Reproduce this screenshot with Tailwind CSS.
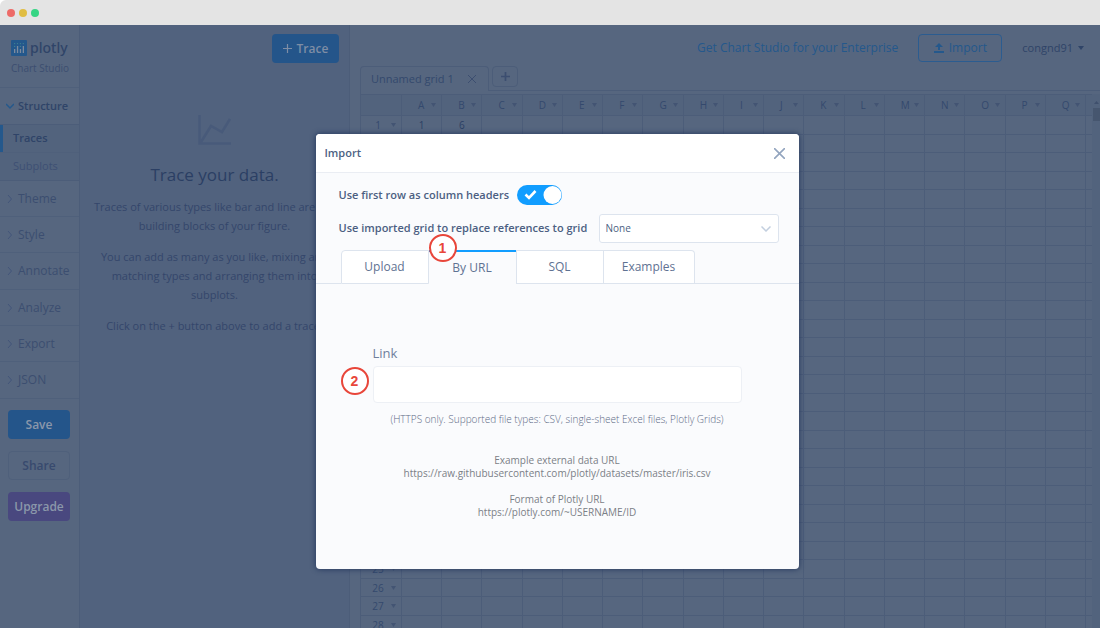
<!DOCTYPE html>
<html lang="en">
<head>
<meta charset="utf-8">
<title>Chart Studio</title>
<script src="https://cdn.jsdelivr.net/npm/@tailwindcss/browser@4"></script>
</head>
<body class="bg-white font-['Open_Sans',sans-serif] text-[12px] text-[#34496d]">
<div class="flex h-screen flex-col overflow-hidden">
  <header class="flex h-[25px] shrink-0 items-center gap-1 rounded-tl-md bg-[#e4e4e4] pl-[7px]">
    <span class="size-2 rounded-full bg-[#ed6b68]"></span>
    <span class="size-2 rounded-full bg-[#e0bd43]"></span>
    <span class="size-2 rounded-full bg-[#36d584]"></span>
  </header>

  <div class="relative flex min-h-0 flex-1">
    <!-- Sidebar -->
    <nav class="flex w-20 shrink-0 flex-col border-r border-[#4c5d79] bg-[#56667f] text-[#3c4e70]">
      <div class="flex h-[63px] flex-col border-b border-[#4f607b] pl-[11px] pt-3">
        <div class="flex h-[22px] items-center gap-[3px]">
          <svg class="size-4" viewBox="0 0 16 16"><rect width="16" height="16" rx="1" fill="#24588c"/><g fill="#7d8b9f"><rect x="3" y="9" width="1.3" height="4"/><rect x="5.9" y="6" width="1.3" height="7"/><rect x="8.8" y="9" width="1.3" height="4"/><rect x="11.7" y="6" width="1.3" height="7"/></g><g fill="#3f8291"><circle cx="3.6" cy="3.6" r=".7"/><circle cx="6.5" cy="3.6" r=".7"/><circle cx="9.4" cy="3.6" r=".7"/><circle cx="12.3" cy="3.6" r=".7"/><circle cx="3.6" cy="6.4" r=".7"/><circle cx="9.4" cy="6.4" r=".7"/></g></svg>
          <span class="font-['Noto_Sans',sans-serif] text-[14px] font-medium leading-none text-[#2f4468]">plotly</span>
        </div>
        <span class="text-[10px] leading-[18px]">Chart Studio</span>
      </div>
      <a href="#" class="flex h-[36px] items-center gap-1 pl-[6px] text-[11px] font-semibold text-[#2f4468]">
        <svg class="h-2 w-2" viewBox="0 0 8 8" fill="none" stroke="#24588c" stroke-width="1.5"><path d="M0 2l4 4 4-4"/></svg>Structure</a>
      <div class="border-y border-[#4c5d79] bg-[#52637d]">
        <a href="#" class="flex h-[27px] items-center border-l-3 border-[#24588c] pl-[10px] text-[11px] font-semibold text-[#2f4468]">Traces</a>
        <a href="#" class="flex h-7 items-center border-t border-[#4f607b] pb-px pl-[13px] text-[11px] text-[#3e5074]">Subplots</a>
      </div>
      <div id="sections"></div>
      <div class="flex flex-col gap-3 px-2 pt-[11px] pr-[9px] text-[#8b97aa]">
        <button class="h-[29px] rounded bg-[#24558a] text-[12px] font-semibold">Save</button>
        <button class="h-[29px] rounded border border-[#4f607b] text-[12px] font-semibold text-[#384a6e]">Share</button>
        <button class="h-[29px] rounded bg-[#49487f] text-[12px] font-semibold">Upgrade</button>
      </div>
    </nav>

    <!-- Trace panel -->
    <section class="flex w-[270px] shrink-0 flex-col border-r border-[#4c5d79] bg-[#51627e]">
      <div class="flex justify-end pr-[10px] pt-[9px]">
        <button class="flex h-[29px] w-[67px] items-center justify-center gap-[5px] rounded bg-[#24558a] font-semibold text-[#7e8da5]">
          <svg class="size-[9px]" viewBox="0 0 9 9" stroke="currentColor" stroke-width="1.2"><path d="M4.5 0v9M0 4.5h9"/></svg>Trace</button>
      </div>
      <svg class="mt-[52px] ml-[118px] h-[30px] w-[33px]" viewBox="0 0 33 30" fill="none" stroke="#455879" stroke-width="2.500" opacity=".7"><path d="M1.500 0v28.500H33"/><path d="M3 27L13 11l11 6L32 4"/></svg>
      <div class="flex flex-col items-center gap-3 whitespace-nowrap text-center text-[11px] leading-[19px] text-[#34466b]">
        <h2 class="mt-[18px] h-[22px] text-[17px] leading-[23px] text-[#2b3f64]">Trace your data.</h2>
        <p>Traces of various types like bar and line are the<br>building blocks of your figure.</p>
        <p>You can add as many as you like, mixing and<br>matching types and arranging them into<br>subplots.</p>
        <p>Click on the + button above to add a trace.</p>
      </div>
    </section>

    <!-- Workspace -->
    <main class="flex min-w-0 flex-1 flex-col overflow-hidden bg-[#56667f] pl-[10px]">
      <div class="flex h-[41px] shrink-0 items-end justify-end pb-1 pr-4">
        <div class="flex h-7 items-center gap-5">
          <a href="#" class="text-[#24588c]">Get Chart Studio for your Enterprise</a>
          <button class="flex h-7 w-[84px] items-center justify-center gap-[5px] rounded border border-[#2b5c90] text-[#24588c]">
            <svg class="size-[10px]" viewBox="0 0 10 10" fill="currentColor"><path d="M5 0L9 4H6v3H4V4H1zM0 8h10v2H0z"/></svg>Import</button>
          <a href="#" class="flex items-center gap-[5px] text-[11px] text-[#2f4468]">congnd91
            <svg class="h-1 w-[6px]" viewBox="0 0 6 4" fill="currentColor"><path d="M0 0h6L3 4z"/></svg></a>
        </div>
      </div>
      <div class="flex h-[25px] shrink-0">
        <div class="flex w-[129px] items-center justify-between rounded-t border border-b-0 border-[#4c5d79] pl-[10px] pr-3 text-[11px]">Unnamed grid 1
          <button aria-label="Close grid"><svg class="size-2" viewBox="0 0 8 8" stroke="#3c4e70"><path d="M0 0l8 8M8 0L0 8"/></svg></button></div>
        <div class="flex-1 border-b border-[#4c5d79] pl-[3px]">
          <button aria-label="Add grid" class="flex h-[21px] w-[26px] items-center justify-center rounded-sm border border-[#4c5d79]"><svg class="size-[9px]" viewBox="0 0 9 9" stroke="#3c4e70" stroke-width="1.700"><path d="M4.500 0v9M0 4.500h9"/></svg></button>
        </div>
      </div>
      <div class="flex min-h-0 flex-1 overflow-hidden border-l border-[#4c5d79] pt-[3px]">
        <div class="min-w-0 flex-1">
          <table class="w-full table-fixed border-separate border-spacing-0 text-[10px] leading-none text-[#34496d]">
            <thead><tr id="head" class="h-[22px] bg-[#52637d]"></tr></thead>
            <tbody id="rows"></tbody>
          </table>
        </div>
        <div class="flex w-2 flex-col items-center bg-[#52637d] pt-[7px]">
          <svg class="h-[3px] w-[5px]" viewBox="0 0 5 3" fill="#3f506d"><path d="M0 3h5L2.500 0z"/></svg>
          <div class="mt-1 h-[13px] w-[7px] bg-[#46566f]"></div>
        </div>
      </div>
    </main>

    <!-- Import dialog -->
    <div class="absolute inset-0 flex items-start justify-center pl-[14px] pt-[109px]">
      <div role="dialog" aria-labelledby="dlg" class="flex h-[435px] w-[483px] flex-col overflow-hidden rounded bg-[#fafbfd] text-[#4c5f82] shadow-[0_0_5px_1px_rgba(30,50,90,0.7)]">
        <div class="flex h-[39px] shrink-0 items-center justify-between border-b border-[#eaedf3] bg-white pl-[9px] pr-[14px]">
          <h1 id="dlg" class="text-[11px] font-semibold">Import</h1>
          <button aria-label="Close"><svg class="size-[11px]" viewBox="0 0 11 11" stroke="#93a5bf" stroke-width="1.600"><path d="M0 0l11 11M11 0L0 11"/></svg></button>
        </div>
        <div class="flex flex-col pl-[23px] pr-5 pt-3">
          <div class="flex h-5 items-center gap-2">
            <label for="hdr" class="text-[11px] font-semibold">Use first row as column headers</label>
            <span class="relative flex">
              <input id="hdr" type="checkbox" checked class="h-5 w-[45px] appearance-none rounded-full bg-[#119dff]">
              <svg class="pointer-events-none absolute inset-0 h-5 w-[45px]" viewBox="0 0 45 20"><circle cx="35.500" cy="10" r="9" fill="#fff"/><path d="M8.500 9.500l3.500 3.500 6.500-7" fill="none" stroke="#fff" stroke-width="2.600"/></svg>
            </span>
          </div>
          <div class="mt-[9px] flex h-[29px] items-center justify-between">
            <label for="repl" class="whitespace-nowrap text-[11px] font-semibold">Use imported grid to replace references to grid</label>
            <span class="relative flex w-[180px]">
              <select id="repl" class="h-[29px] w-full appearance-none rounded-[3px] border border-[#dde4ee] bg-white pl-[6px] text-[10px]"><option>None</option></select>
              <svg class="pointer-events-none absolute right-2 top-3 h-[6px] w-[10px]" viewBox="0 0 10 6" fill="none" stroke="#c3cfdf" stroke-width="1.500"><path d="M.5 .5L5 5 9.500 .5"/></svg>
            </span>
          </div>
        </div>
        <div role="tablist" class="mt-[7px] flex h-[34px] shrink-0 text-[#5f7292]">
          <span class="w-[25px] border-b border-[#dde4ee]"></span>
          <button role="tab" class="w-[88px] rounded-tl border border-[#dde4ee] bg-white">Upload</button>
          <button role="tab" aria-selected="true" class="relative w-[87px] border-t-2 border-[#119dff] pb-px">By URL
            <span class="absolute left-0 -top-[18px] flex size-7 items-center justify-center rounded-full border-2 border-[#e8463a] bg-white font-['Liberation_Sans',sans-serif] text-[14px] font-bold text-[#e8463a]">1</span></button>
          <button role="tab" class="w-[88px] border border-[#dde4ee] bg-white">SQL</button>
          <button role="tab" class="w-[91px] rounded-tr border border-l-0 border-[#dde4ee] bg-white">Examples</button>
          <span class="flex-1 border-b border-[#dde4ee]"></span>
        </div>
        <div class="relative flex flex-col px-[57px] pt-[60px]">
          <label for="link" class="text-[13px] leading-[18px] text-[#6f7f9c]">Link</label>
          <input id="link" type="text" class="mt-1 h-[37px] rounded border border-[#edf0f5] bg-white px-2">
          <span class="absolute left-[25px] top-[83px] flex size-7 items-center justify-center rounded-full border-2 border-[#e8463a] bg-white font-['Liberation_Sans',sans-serif] text-[14px] font-bold text-[#e8463a]">2</span>
          <p class="mt-[10px] whitespace-nowrap text-center text-[10px] font-light leading-[13px] text-[#5d6a86]">(HTTPS only. Supported file types: CSV, single-sheet Excel files, Plotly Grids)</p>
          <p class="mt-7 text-center text-[10px] leading-[13px] text-[#7b8087]">Example external data URL<br>https://raw.githubusercontent.com/plotly/datasets/master/iris.csv</p>
          <p class="mt-[13px] text-center text-[10px] leading-[13px] text-[#7b8087]">Format of Plotly URL<br>https://plotly.com/~USERNAME/ID</p>
        </div>
      </div>
    </div>
  </div>
</div>
<script>
  document.getElementById('sections').innerHTML = ['Theme','Style','Annotate','Analyze','Export','JSON'].map(t =>
    `<a href="#" class="flex h-9 nth-[3n]:h-[37px] items-center gap-1 border-b border-[#4f607b] pl-[6px]"><svg class="h-2 w-2" viewBox="0 0 8 8" fill="none" stroke="#43557a"><path d="M2 0l3.500 4L2 8"/></svg>${t}</a>`).join('');
  const tri = '<svg class="h-1 w-[5px]" viewBox="0 0 5 4" fill="#435473"><path d="M0 0h5L2.500 4z"/></svg>';
  const cols = [...'ABCDEFGHIJKLMNOPQ'];
  document.getElementById('head').innerHTML = '<th class="w-[41px] border-y border-r border-[#4c5d79]"></th>' +
    cols.map(c => `<th class="border-y border-r border-[#4c5d79] p-0 font-normal"><div class="flex items-center justify-between pl-4 pr-[5px]">${c}${tri}</div></th>`).join('') +
    '<th class="w-[6px] border-y border-[#4c5d79] p-0"></th>';
  let out = '';
  for (let r = 1; r <= 28; r++) {
    out += `<tr class="h-[18px] odd:h-[19px]"><th class="border-r border-b border-[#4c5d79] p-0 font-normal"><div class="flex items-center justify-between pl-[11px] pr-[5px]"><span class="min-w-3 text-center">${r}</span>${tri}</div></th>` +
      cols.map((c, i) => `<td class="border-r border-b border-[#4c5d79] p-0 text-center text-[#2b3f64]">${r === 1 ? ['1','6'][i] || '' : ''}</td>`).join('') +
      '<td class="border-b border-[#4c5d79] p-0"></td></tr>';
  }
  document.getElementById('rows').innerHTML = out;
</script>
</body>
</html>
